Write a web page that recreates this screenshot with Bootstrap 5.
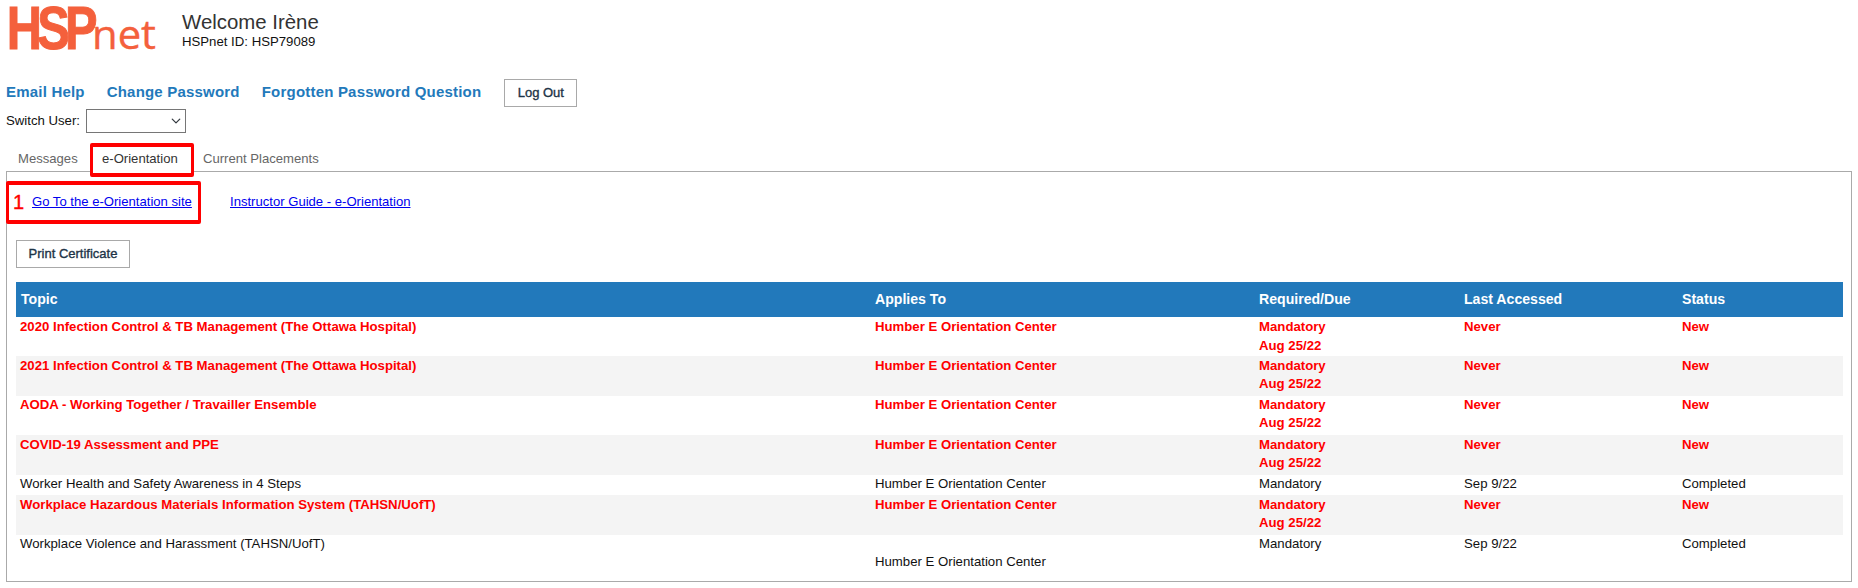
<!DOCTYPE html>
<html lang="en">
<head>
    <meta charset="UTF-8">
    <title>HSPnet - e-Orientation</title>
    <link rel="stylesheet" href="https://cdn.jsdelivr.net/npm/bootstrap@5.3.0/dist/css/bootstrap.min.css">
    <script src="https://cdn.jsdelivr.net/npm/bootstrap@5.3.0/dist/js/bootstrap.bundle.min.js"></script>
    <style>
        body {
            font-family: "Liberation Sans", Arial, sans-serif;
            font-size: 13px;
            color: #000;
            background: #fff;
            padding: 0 6px;
            overflow: hidden;
        }

        /* header */
        .site-head { height: 79px; padding-top: 3px; }
        .site-logo { width: 176px; height: 52px; display: block; flex: none; overflow: visible; }
        .logo-hsp { font-family: "Liberation Sans", sans-serif; font-size: 61px; font-weight: 700; letter-spacing: -6px; fill: #f4603c; stroke: #f4603c; stroke-width: 1px; }
        .logo-net { font-family: "Open Sans", sans-serif; font-size: 41px; font-weight: 400; fill: #f4603c; stroke: #f4603c; stroke-width: .4px; }
        .welcome-title { font-size: 20.4px; line-height: 24px; margin-top: 7px; color: #333; }
        .welcome-id { font-size: 13.2px; line-height: 16px; margin-top: 0; color: #111; }

        /* links row */
        .top-links { height: 28px; }
        .top-link { color: #2279bb; font-weight: 700; font-size: 15px; text-decoration: none; margin-right: 22px; letter-spacing: .2px; padding-bottom: 2px; }
        .plain-btn {
            background: #fff;
            border: 1px solid #a9a9a9;
            border-radius: 0;
            color: #1d3447;
            font-size: 13px;
            font-weight: 400;
            -webkit-text-stroke: .35px #1d3447;
            padding: 0;
            height: 28px;
        }
        .logout-btn { width: 73px; margin-left: 1px; }
        .switch-row { height: 24px; margin-top: 2px; font-size: 13.2px; color: #111; }
        .switch-select {
            width: 100px;
            height: 24px;
            margin-left: 6px;
            padding: 0 4px;
            border: 1px solid #767676;
            border-radius: 0;
            background-size: 12px 10px;
            background-position: right 3px center;
        }

        /* tabs */
        .tab-strip { height: 38px; padding-left: 3px; align-items: flex-end; }
        .tab-item { font-size: 13.1px; color: #666; line-height: 16px; padding-bottom: 4px; }
        .tab-one { width: 81px; padding-left: 9px; }
        .tab-active {
            width: 104px;
            height: 34px;
            border: 4px solid #f00;
            border-width: 4px 3px;
            border-radius: 2px;
            margin-bottom: -6px;
            text-align: left;
            line-height: 24px;
            padding: 0 0 0 9px;
            color: #333;
            background: #fff;
            position: relative;
            z-index: 1;
        }
        .tab-last { margin-left: 9px; }

        .tab-body { border: 1px solid #aaa; height: 411px; padding: 9px 7px 0 9px; }
        .guide-row { margin-left: -10px; height: 43px; padding-bottom: 2px; }
        .boxed-link {
            width: 195px;
            height: 43px;
            flex: none;
            border: 4px solid #f00;
            border-width: 4px 3px;
            border-radius: 2px;
            padding: 0 0 2px 4px;
            align-self: flex-start;
        }
        .step-num { color: #f00; font-size: 20px; -webkit-text-stroke: .4px #f00; width: 19px; }
        .guide-link { color: #00e; font-size: 13.1px; }
        .guide-link-2 { margin-left: 29px; }
        .print-btn { width: 114px; height: 28px; margin-top: 16px; display: block; }

        /* table */
        .topic-table { margin: 14px 0 0; width: 1827px; table-layout: fixed; font-size: 13.2px; --bs-table-bg: transparent; }
        .topic-table th, .topic-table td { border: 0; padding: 0 4px; vertical-align: top; }
        .topic-table thead th { background: #2279bb; color: #fff; height: 35px; vertical-align: middle; padding-top: 1px; font-size: 14.1px; box-shadow: none; }
        .topic-table thead th:first-child { padding-left: 5px; }
        .topic-table td { line-height: 18px; box-shadow: none; color: #111; }
        .topic-table tbody tr:first-child td { line-height: 19px; }
        .topic-table tbody tr:nth-child(even) td { background: #f4f4f4; }
        .topic-table tr.is-new td { color: #f00; font-weight: 700; height: 39px; }
        .topic-table tr.is-new:nth-child(even) td { height: 40px; padding-top: 1px; }
        .topic-table tr.is-done td { height: 20px; }
    </style>
</head>
<body>
    <!-- Header -->
    <div class="site-head d-flex">
        <svg class="site-logo" viewBox="0 0 176 52" role="img" aria-label="HSPnet">
            <text class="logo-hsp" x="1" y="46" transform="scale(.8 1)">HSP</text>
            <text class="logo-net" x="86" y="46" textLength="64" lengthAdjust="spacingAndGlyphs">net</text>
        </svg>
        <div>
            <div class="welcome-title">Welcome Irène</div>
            <div class="welcome-id">HSPnet ID: HSP79089</div>
        </div>
    </div>

    <div class="top-links d-flex align-items-center">
        <a class="top-link" href="#">Email Help</a>
        <a class="top-link" href="#">Change Password</a>
        <a class="top-link" href="#">Forgotten Password Question</a>
        <button type="button" class="btn plain-btn logout-btn">Log Out</button>
    </div>

    <div class="switch-row d-flex align-items-center">
        <label for="switchUser">Switch User:</label>
        <select id="switchUser" class="form-select switch-select"><option></option></select>
    </div>

    <!-- Tabs -->
    <div class="tab-strip d-flex">
        <div class="tab-item tab-one">Messages</div>
        <div class="tab-item tab-active">e-Orientation</div>
        <div class="tab-item tab-last">Current Placements</div>
    </div>

    <div class="tab-body">
        <div class="guide-row d-flex align-items-center">
            <div class="boxed-link d-flex align-items-center">
                <span class="step-num">1</span>
                <a class="guide-link" href="#">Go To the e-Orientation site</a>
            </div>
            <a class="guide-link guide-link-2" href="#">Instructor Guide - e-Orientation</a>
        </div>

        <button type="button" class="btn plain-btn print-btn">Print Certificate</button>

        <table class="table topic-table">
            <colgroup>
                <col style="width: 855px">
                <col style="width: 384px">
                <col style="width: 205px">
                <col style="width: 218px">
                <col>
            </colgroup>
            <thead>
                <tr><th>Topic</th><th>Applies To</th><th>Required/Due</th><th>Last Accessed</th><th>Status</th></tr>
            </thead>
            <tbody>
                <tr class="is-new"><td>2020 Infection Control &amp; TB Management (The Ottawa Hospital)</td><td>Humber E Orientation Center</td><td>Mandatory<br>Aug 25/22</td><td>Never</td><td>New</td></tr>
                <tr class="is-new"><td>2021 Infection Control &amp; TB Management (The Ottawa Hospital)</td><td>Humber E Orientation Center</td><td>Mandatory<br>Aug 25/22</td><td>Never</td><td>New</td></tr>
                <tr class="is-new"><td>AODA - Working Together / Travailler Ensemble</td><td>Humber E Orientation Center</td><td>Mandatory<br>Aug 25/22</td><td>Never</td><td>New</td></tr>
                <tr class="is-new"><td>COVID-19 Assessment and PPE</td><td>Humber E Orientation Center</td><td>Mandatory<br>Aug 25/22</td><td>Never</td><td>New</td></tr>
                <tr class="is-done"><td>Worker Health and Safety Awareness in 4 Steps</td><td>Humber E Orientation Center</td><td>Mandatory</td><td>Sep 9/22</td><td>Completed</td></tr>
                <tr class="is-new"><td>Workplace Hazardous Materials Information System (TAHSN/UofT)</td><td>Humber E Orientation Center</td><td>Mandatory<br>Aug 25/22</td><td>Never</td><td>New</td></tr>
                <tr class="is-done"><td>Workplace Violence and Harassment (TAHSN/UofT)</td><td><br>Humber E Orientation Center</td><td>Mandatory</td><td>Sep 9/22</td><td>Completed</td></tr>
            </tbody>
        </table>
    </div>
</body>
</html>
